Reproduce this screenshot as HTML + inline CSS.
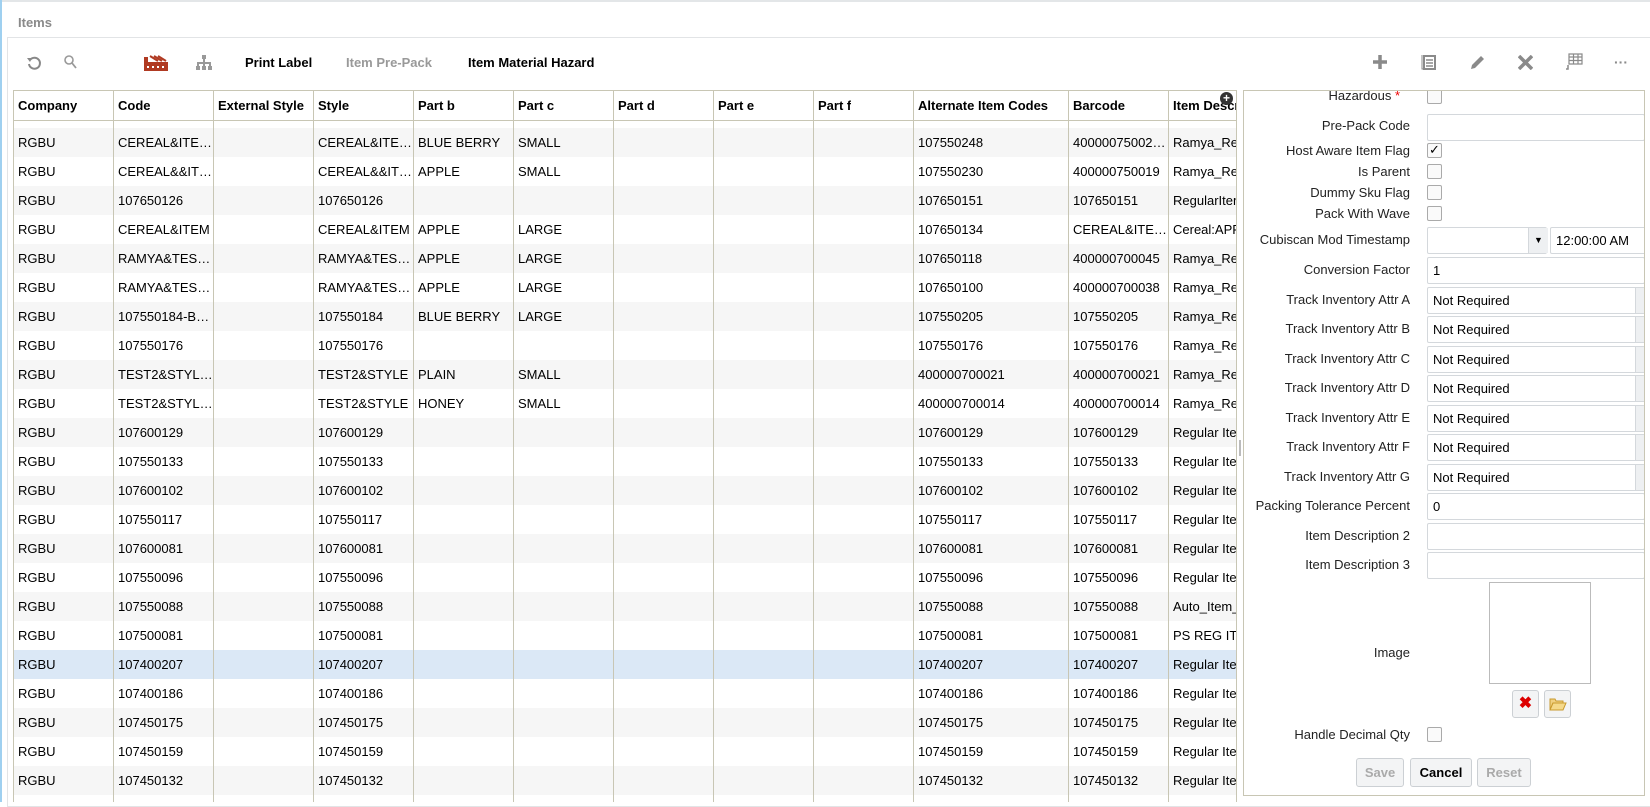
<!DOCTYPE html>
<html><head><meta charset="utf-8"><style>
*{box-sizing:border-box;margin:0;padding:0}
body{width:1650px;height:802px;overflow:hidden;background:#fff;font-family:"Liberation Sans",Arial,sans-serif;font-size:13px;color:#000;position:relative}
.a{position:absolute}
.top{left:0;top:0;width:1650px;height:2px;background:#e3e6e8}
.lb{left:0;top:0;width:2px;height:802px;background:#9fd0f0}
.title{left:18px;top:15px;font-weight:bold;color:#8a8a8a;font-size:13px}
.panel{left:7px;top:37px;width:1650px;height:770px;border:1px solid #e2e4e6;border-right:none}
.tb{top:55px;font-weight:bold;font-size:13px}
.tbl{left:13px;top:90px;width:1224px;height:712px;border:1px solid #c8c6b4;border-bottom:none;overflow:hidden}
.hd{position:absolute;top:0;height:30px;border-bottom:1px solid #c8c6b4;width:100%}
.col{position:absolute;top:0;bottom:0;border-left:1px solid #c8c6b4}
.row{position:absolute;left:0;width:1224px;height:29px}
.c{position:absolute;top:0;height:29px;line-height:29px;padding-left:4px;white-space:nowrap;overflow:hidden}
.h{position:absolute;top:0;height:30px;line-height:30px;padding-left:4px;font-weight:bold;white-space:nowrap;overflow:hidden}
.fp{left:1243px;top:90px;width:402px;height:706px;border:1px solid #c8c6b4;overflow:hidden}
.lbl{position:absolute;right:234px;text-align:right;white-space:nowrap;font-size:13px;color:#222}
.inp{position:absolute;left:183px;width:218px;height:27px;border:1px solid #d4d8dc;border-radius:2px;background:#fff;line-height:25px;padding-left:5px;font-size:13px}
.sel::after{content:"";position:absolute;right:0;top:0;width:8px;height:25px;background:#eef0f2;border-left:1px solid #d4d8dc}
.cb{position:absolute;left:183px;width:15px;height:15px;border:1px solid #aaa;border-radius:2px;background:#fafafa}
.btn{position:absolute;height:29px;border:1px solid #ccd0d4;border-radius:3px;background:#f3f4f5;font-weight:bold;text-align:center;line-height:27px;font-size:13px}
</style></head><body>
<div class="a top"></div><div class="a lb"></div>
<div class="a title">Items</div>
<div class="a panel"></div>
<svg class="a" style="left:26px;top:55px" width="16" height="16" viewBox="0 0 16 16"><path d="M4 5 A5.5 5.5 0 1 1 3 9" fill="none" stroke="#888" stroke-width="2"/><path d="M1 3 L6 3 L4 7 Z" fill="#888"/></svg>
<svg class="a" style="left:63px;top:54px" width="16" height="18" viewBox="0 0 16 18"><circle cx="6" cy="6" r="4" fill="none" stroke="#999" stroke-width="1.6"/><path d="M9 9 L13 14" stroke="#999" stroke-width="1.8"/></svg>
<svg class="a" style="left:144px;top:55px" width="24" height="16" viewBox="0 0 24 16"><path d="M0 2 L4 2 L4 7 L24 7 L24 16 L0 16 Z" fill="#b03a22"/><path d="M6 1 L14 6 M10 1 L18 6 M14 1 L22 6" stroke="#b03a22" stroke-width="2"/><path d="M3 12h2M8 12h2M13 12h2M18 12h2" stroke="#fff" stroke-width="2"/></svg>
<svg class="a" style="left:196px;top:55px" width="16" height="16" viewBox="0 0 16 16" fill="#999"><rect x="6" y="0" width="4" height="4"/><rect x="7" y="4" width="2" height="4"/><rect x="1" y="7" width="14" height="2"/><rect x="1" y="8" width="2" height="4"/><rect x="7" y="8" width="2" height="4"/><rect x="13" y="8" width="2" height="4"/><rect x="0" y="11" width="4" height="4"/><rect x="6" y="11" width="4" height="4"/><rect x="12" y="11" width="4" height="4"/></svg>
<div class="a tb" style="left:245px">Print Label</div>
<div class="a tb" style="left:346px;color:#999">Item Pre-Pack</div>
<div class="a tb" style="left:468px">Item Material Hazard</div>
<svg class="a" style="left:1373px;top:55px" width="14" height="14"><path d="M7 0V14M0 7H14" stroke="#8a8a8a" stroke-width="3.5"/></svg>
<svg class="a" style="left:1421px;top:54px" width="16" height="16"><path d="M1 1V15H14" fill="none" stroke="#8a8a8a" stroke-width="1"/><rect x="3" y="2" width="11" height="13" fill="none" stroke="#8a8a8a" stroke-width="2"/><path d="M5 6H12M5 9H12M5 12H12" stroke="#8a8a8a" stroke-width="1.5"/></svg>
<svg class="a" style="left:1469px;top:54px" width="17" height="17"><path d="M2 15 L3 11 L12 2 L15 5 L6 14 Z" fill="#8a8a8a"/></svg>
<svg class="a" style="left:1518px;top:55px" width="15" height="15"><path d="M1 1L14 14M14 1L1 14" stroke="#8a8a8a" stroke-width="3.5"/></svg>
<svg class="a" style="left:1565px;top:53px" width="18" height="18"><path d="M4 1H17V11H4ZM4 4H17M4 7.5H17M8.5 1V11M13 1V11" fill="none" stroke="#8a8a8a" stroke-width="1.2"/><path d="M3 12V16H1" fill="none" stroke="#8a8a8a" stroke-width="1.5"/></svg>
<div class="a" style="left:1614px;top:54px;color:#8a8a8a;font-size:14px;font-weight:bold">···</div>

<div class="a tbl">
<div class="hd"></div>
<div class="h" style="left:0">Company</div><div class="h" style="left:100px">Code</div><div class="h" style="left:200px">External Style</div><div class="h" style="left:300px">Style</div><div class="h" style="left:400px">Part b</div><div class="h" style="left:500px">Part c</div><div class="h" style="left:600px">Part d</div><div class="h" style="left:700px">Part e</div><div class="h" style="left:800px">Part f</div><div class="h" style="left:900px">Alternate Item Codes</div><div class="h" style="left:1055px">Barcode</div><div class="h" style="left:1155px;width:70px">Item Description</div>
<div id="rows"></div>
<div class="col" style="left:99px"></div><div class="col" style="left:199px"></div><div class="col" style="left:299px"></div><div class="col" style="left:399px"></div><div class="col" style="left:499px"></div><div class="col" style="left:599px"></div><div class="col" style="left:699px"></div><div class="col" style="left:799px"></div><div class="col" style="left:899px"></div><div class="col" style="left:1054px"></div><div class="col" style="left:1154px"></div>
<div class="a" style="left:1206px;top:1px;width:13px;height:13px;border-radius:50%;background:#333;color:#fff;font-size:12px;line-height:13px;text-align:center;font-weight:bold">+</div>
</div>
<div class="a" style="left:1239px;top:440px;width:2px;height:16px;border-left:1px solid #bbb;border-right:1px solid #bbb"></div>

<div class="a fp">
<div class="lbl" style="top:-3px;right:244px">Hazardous <span style="color:#e00">*</span></div><div class="cb" style="top:-2px"></div>
<div class="lbl" style="top:27px">Pre-Pack Code</div><div class="inp" style="top:23px"></div>
<div class="lbl" style="top:52px">Host Aware Item Flag</div><div class="cb" style="top:52px;font-size:13px;line-height:12px;text-align:center">✓</div>
<div class="lbl" style="top:73px">Is Parent</div><div class="cb" style="top:73px"></div>
<div class="lbl" style="top:94px">Dummy Sku Flag</div><div class="cb" style="top:94px"></div>
<div class="lbl" style="top:115px">Pack With Wave</div><div class="cb" style="top:115px"></div>
<div class="lbl" style="top:141px">Cubiscan Mod Timestamp</div>
<div class="inp" style="top:136px;width:120px"></div><div class="a" style="left:284px;top:137px;width:20px;height:25px;background:#eef0f2;border-left:1px solid #d4d8dc;font-size:9px;text-align:center;line-height:25px">▼</div>
<div class="inp" style="top:136px;left:306px;width:100px">12:00:00 AM</div>
<div class="lbl" style="top:171px">Conversion Factor</div><div class="inp" style="top:166px">1</div>
<div class="lbl" style="top:201px">Track Inventory Attr A</div><div class="inp sel" style="top:196px">Not Required</div>
<div class="lbl" style="top:230px">Track Inventory Attr B</div><div class="inp sel" style="top:225px">Not Required</div>
<div class="lbl" style="top:260px">Track Inventory Attr C</div><div class="inp sel" style="top:255px">Not Required</div>
<div class="lbl" style="top:289px">Track Inventory Attr D</div><div class="inp sel" style="top:284px">Not Required</div>
<div class="lbl" style="top:319px">Track Inventory Attr E</div><div class="inp sel" style="top:314px">Not Required</div>
<div class="lbl" style="top:348px">Track Inventory Attr F</div><div class="inp sel" style="top:343px">Not Required</div>
<div class="lbl" style="top:378px">Track Inventory Attr G</div><div class="inp sel" style="top:373px">Not Required</div>
<div class="lbl" style="top:407px">Packing Tolerance Percent</div><div class="inp" style="top:402px">0</div>
<div class="lbl" style="top:437px">Item Description 2</div><div class="inp" style="top:432px"></div>
<div class="lbl" style="top:466px">Item Description 3</div><div class="inp" style="top:461px"></div>
<div class="lbl" style="top:554px">Image</div>
<div class="a" style="left:245px;top:491px;width:102px;height:102px;border:1px solid #bbb"></div>
<div class="btn" style="left:268px;top:599px;width:27px;height:28px;color:#d00;font-size:16px;line-height:26px">✖</div>
<div class="btn" style="left:300px;top:599px;width:27px;height:28px"><svg width="18" height="14" style="margin-top:6px" viewBox="0 0 18 14"><path d="M1 2H6L7 4H14V6H4L1 13Z" fill="#f0d080" stroke="#c99a2e"/><path d="M4 6H17L14 13H1Z" fill="#f5d98a" stroke="#c99a2e"/></svg></div>
<div class="lbl" style="top:636px">Handle Decimal Qty</div><div class="cb" style="top:636px"></div>
<div class="btn" style="left:112px;top:667px;width:48px;color:#aaa">Save</div>
<div class="btn" style="left:166px;top:667px;width:62px">Cancel</div>
<div class="btn" style="left:233px;top:667px;width:54px;color:#aaa">Reset</div>
</div>
<script>
var d=[["RGBU","CEREAL&ITE…","","CEREAL&ITE…","BLUE BERRY","SMALL","107550248","40000075002…","Ramya_Reg"],
["RGBU","CEREAL&&IT…","","CEREAL&&IT…","APPLE","SMALL","107550230","400000750019","Ramya_Reg"],
["RGBU","107650126","","107650126","","","107650151","107650151","RegularItem"],
["RGBU","CEREAL&ITEM","","CEREAL&ITEM","APPLE","LARGE","107650134","CEREAL&ITE…","Cereal:APPLE"],
["RGBU","RAMYA&TES…","","RAMYA&TES…","APPLE","LARGE","107650118","400000700045","Ramya_Reg"],
["RGBU","RAMYA&TES…","","RAMYA&TES…","APPLE","LARGE","107650100","400000700038","Ramya_Reg"],
["RGBU","107550184-B…","","107550184","BLUE BERRY","LARGE","107550205","107550205","Ramya_Reg"],
["RGBU","107550176","","107550176","","","107550176","107550176","Ramya_Reg"],
["RGBU","TEST2&STYL…","","TEST2&STYLE","PLAIN","SMALL","400000700021","400000700021","Ramya_Reg"],
["RGBU","TEST2&STYL…","","TEST2&STYLE","HONEY","SMALL","400000700014","400000700014","Ramya_Reg"]];
["107600129","107550133","107600102","107550117","107600081","107550096","107550088","107500081","107400207","107400186","107450175","107450159","107450132"].forEach(function(c,i){var desc=c=="107550088"?"Auto_Item_":c=="107500081"?"PS REG ITEM":"Regular Item";d.push(["RGBU",c,"",c,"","",c,c,desc])});
var h="",L=[0,100,200,300,400,500,900,1055,1155];
d.forEach(function(r,i){var bg=i==18?"#dbe8f6":(i%2==0?"#f6f6f6":"#fff");h+='<div class="row" style="top:'+(37+i*29)+'px;background:'+bg+'">';r.forEach(function(t,j){h+='<div class="c" style="left:'+L[j]+'px;width:'+(j==6?155:(j==8?70:100))+'px">'+t.replace(/&/g,"&amp;")+'</div>'});h+='</div>'});
document.getElementById("rows").innerHTML=h;
</script>
</body></html>
